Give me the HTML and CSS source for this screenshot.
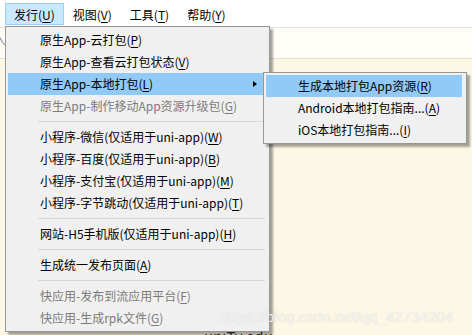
FILE: index.html
```html
<!DOCTYPE html>
<html lang="zh-CN">
<head>
    <meta charset="UTF-8">
    <title>HBuilderX - 发行菜单</title>
    <link rel="stylesheet" href="styles.css">
</head>
<body>
    <!-- Top menu bar -->
    <div class="menubar">
        <span class="menubar-item active">发行(<u>U</u>)</span>
        <span class="menubar-item">视图(<u>V</u>)</span>
        <span class="menubar-item">工具(<u>T</u>)</span>
        <span class="menubar-item">帮助(<u>Y</u>)</span>
    </div>

    <!-- Editor area behind the menus -->
    <div class="workspace">
        <div class="toolbar"><span class="left-cut">入</span></div>
        <div class="editor">
            <div class="code-line">uniTy.edu</div>
        </div>
    </div>

    <!-- Dropdown for 发行 -->
    <div class="menu main-menu">
        <div class="item">原生App-云打包(<u>P</u>)</div>
        <div class="item">原生App-查看云打包状态(<u>V</u>)</div>
        <div class="item selected">原生App-本地打包(<u>L</u>)<span class="arrow"></span></div>
        <div class="item disabled">原生App-制作移动App资源升级包(<u>G</u>)</div>
        <div class="sep"></div>
        <div class="item">小程序-微信(仅适用于uni-app)(<u>W</u>)</div>
        <div class="item">小程序-百度(仅适用于uni-app)(<u>B</u>)</div>
        <div class="item">小程序-支付宝(仅适用于uni-app)(<u>M</u>)</div>
        <div class="item">小程序-字节跳动(仅适用于uni-app)(<u>T</u>)</div>
        <div class="sep"></div>
        <div class="item">网站-H5手机版(仅适用于uni-app)(<u>H</u>)</div>
        <div class="sep"></div>
        <div class="item">生成统一发布页面(<u>A</u>)</div>
        <div class="sep"></div>
        <div class="item disabled">快应用-发布到流应用平台(<u>F</u>)</div>
        <div class="item disabled">快应用-生成rpk文件(<u>G</u>)</div>
    </div>

    <!-- Submenu for 本地打包 -->
    <div class="menu sub-menu">
        <div class="item selected">生成本地打包App资源(<u>R</u>)</div>
        <div class="item">Android本地打包指南...(<u>A</u>)</div>
        <div class="item">iOS本地打包指南...(<u>I</u>)</div>
    </div>

    <div class="watermark">https://blog.csdn.net/qq_42734204</div>
</body>
</html>
```

FILE: styles.css
```css
body {
    margin: 0;
    width: 472px;
    height: 335px;
    overflow: hidden;
    position: relative;
    font-family: "Noto Sans CJK SC", "Noto Sans", sans-serif;
    font-size: 12px;
    color: #000;
    background: #fdf7e6;
}

u {
    text-decoration: underline;
    text-underline-offset: 2px;
}

/* Menu bar */
.menubar {
    height: 27px;
    display: flex;
    align-items: flex-start;
    padding: 3px 0 0 5px;
    box-sizing: border-box;
    background: #fff;
}

.menubar-item {
    height: 22px;
    line-height: 21px;
    padding: 0 8px;
    box-sizing: border-box;
    border: 1px solid transparent;
}

.menubar-item.active {
    background: #cce8ff;
    border-color: #99d1ff;
}

/* Background workspace */
.workspace {
    height: 308px;
    display: flex;
    flex-direction: column;
}

.toolbar {
    height: 30px;
    background: #fffdf6;
    border-top: 1px solid #e3e3e3;
    border-bottom: 1px solid #e8dfc8;
    overflow: hidden;
    line-height: 24px;
    color: #999;
}

.left-cut {
    margin-left: -6px;
}

.editor {
    flex: 1;
    display: flex;
    flex-direction: column;
    justify-content: flex-end;
    padding-left: 204px;
}

.code-line {
    height: 8px;
    overflow: visible;
    font-size: 15px;
    line-height: 20px;
    color: #333;
}

/* Popup menus */
.menu {
    position: absolute;
    background: #f0f0f0;
    border: 1px solid #979797;
    padding: 2px 4px 2px 2px;
    box-shadow: 3px 3px 2px rgba(0, 0, 0, 0.35);
    z-index: 2;
}

.main-menu {
    left: 5px;
    top: 26px;
    width: 257px;
}

.sub-menu {
    left: 263px;
    top: 72px;
    width: 196px;
    z-index: 3;
}

.item {
    height: 22px;
    line-height: 22px;
    padding-left: 32px;
    position: relative;
    white-space: nowrap;
}

.item.selected {
    background: #91c9f7;
}

.item.disabled {
    color: #7b7b7b;
}

.arrow {
    position: absolute;
    right: 8px;
    top: 8px;
    width: 0;
    height: 0;
    border-top: 3px solid transparent;
    border-bottom: 3px solid transparent;
    border-left: 4px solid #000;
}

.sep {
    height: 9px;
    margin: 0 0 0 30px;
    display: flex;
    align-items: center;
}

.sep::before {
    content: "";
    flex: 1;
    border-top: 1px solid #d7d7d7;
}

.watermark {
    position: absolute;
    left: 220px;
    top: 308px;
    font-family: "Liberation Sans", Arial, sans-serif;
    font-size: 15px;
    letter-spacing: 0.1px;
    color: rgba(255, 255, 255, 0.8);
    text-shadow: 0 0 1px rgba(110, 110, 110, 0.35);
    z-index: 5;
    white-space: nowrap;
}
```
